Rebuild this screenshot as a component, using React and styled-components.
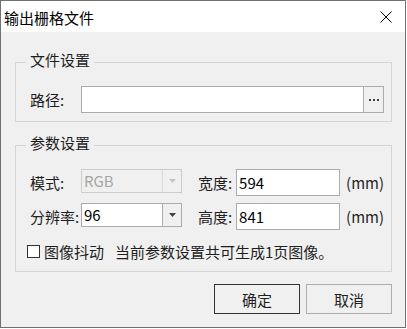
import React from 'react';
import styled, { createGlobalStyle } from 'styled-components';

const GlobalStyle = createGlobalStyle`
  html, body {
    margin: 0;
    padding: 0;
    background: #ffffff;
  }
  body {
    font-family: "Noto Sans CJK SC", "Noto Sans", sans-serif;
    font-size: 15px;
    color: #1e1e1e;
  }
  * {
    box-sizing: border-box;
  }
`;

const Dialog = styled.div`
  width: 406px;
  height: 328px;
  border: 1px solid #707070;
  background: #f0f0f0;
  display: flex;
  flex-direction: column;
`;

const TitleBar = styled.div`
  height: 31px;
  flex-shrink: 0;
  background: #ffffff;
  display: flex;
  align-items: center;
  justify-content: space-between;
  padding: 0 13px 0 3px;
`;

const Title = styled.span`
  font-size: 15px;
  line-height: 15px;
  color: #000000;
  padding-top: 1px;
`;

const CloseButton = styled.span`
  display: flex;
  width: 12px;
  height: 12px;
  margin-top: 1px;
`;

const Body = styled.div`
  flex: 1;
  padding-top: 20px;
  display: flex;
  flex-direction: column;
`;

const Group = styled.fieldset`
  margin: ${p => p.$top}px 13px 0 14px;
  padding: 14px 7px ${p => p.$bottom}px 10px;
  border: 1px solid #d5d5d5;
  min-width: 0;
`;

const Legend = styled.legend`
  padding: 0 4px 5px;
  font-size: 15px;
  line-height: 15px;
  color: #1e1e1e;
`;

const Row = styled.div`
  display: flex;
  align-items: flex-start;
  height: 27px;
  padding-left: 4px;

  & + & {
    margin-top: 7px;
  }
`;

const Label = styled.span`
  flex-shrink: 0;
  width: ${p => p.$w}px;
  margin-left: ${p => p.$ml || 0}px;
  line-height: 27px;
  white-space: nowrap;
`;

const TextBox = styled.input`
  width: ${p => p.$w}px;
  height: 27px;
  margin: 0;
  padding: 0 2px;
  border: 1px solid #ababab;
  background: #ffffff;
  font-family: inherit;
  font-size: 15px;
  color: #000000;
  outline: none;
`;

const PathField = styled.div`
  display: flex;
`;

const BrowseButton = styled.div`
  width: 20px;
  height: 27px;
  border: 1px solid #ababab;
  border-left: none;
  background: #f0f0f0;
  display: flex;
  align-items: center;
  justify-content: center;
`;

const Combo = styled.div`
  width: 104px;
  height: 24px;
  display: flex;
  border: 1px solid ${p => (p.$disabled ? '#cccccc' : '#ababab')};
`;

const ComboValue = styled.span`
  flex: 1;
  padding-left: 2px;
  line-height: 22px;
  background: ${p => (p.$disabled ? '#f0f0f0' : '#ffffff')};
  color: ${p => (p.$disabled ? '#a6a6a6' : '#000000')};
`;

const ComboArrow = styled.span`
  width: 19px;
  display: flex;
  align-items: center;
  justify-content: center;
  background: #f0f0f0;
  border-left: 1px solid ${p => (p.$disabled ? '#dadada' : '#ababab')};
  color: ${p => (p.$disabled ? '#c4c4c4' : '#404040')};
`;

const Unit = styled.span`
  margin-left: 6px;
  line-height: 27px;
`;

const CheckRow = styled.div`
  display: flex;
  align-items: center;
  height: 20px;
  margin-top: 11px;
  padding-left: 1px;
`;

const CheckBox = styled.input`
  appearance: none;
  width: 13px;
  height: 13px;
  margin: 0 4px 0 0;
  border: 1px solid #333333;
  background: #ffffff;
`;

const Note = styled.span`
  margin-left: 11px;
`;

const Buttons = styled.div`
  display: flex;
  justify-content: flex-end;
  gap: 6px;
  margin-top: 12px;
  padding-right: 13px;
`;

const Button = styled.button`
  width: 86px;
  height: 30px;
  margin: 0;
  padding: 0;
  border: 1px solid ${p => (p.$primary ? '#333333' : '#adadad')};
  background: #f0f0f0;
  font-family: inherit;
  font-size: 15px;
  color: #1e1e1e;
`;

const Arrow = () => (
  <svg width="7" height="4" viewBox="0 0 7 4">
    <polygon points="0,0 7,0 3.5,4" fill="currentColor" />
  </svg>
);

const Dropdown = ({ value, disabled }) => (
  <Combo $disabled={disabled}>
    <ComboValue $disabled={disabled}>{value}</ComboValue>
    <ComboArrow $disabled={disabled}>
      <Arrow />
    </ComboArrow>
  </Combo>
);

export default function App() {
  return (
    <>
      <GlobalStyle />
      <Dialog>
        <TitleBar>
          <Title>输出栅格文件</Title>
          <CloseButton>
            <svg width="12" height="12" viewBox="0 0 12 12">
              <path d="M0.5 0.5 L11.5 11.5 M11.5 0.5 L0.5 11.5" stroke="#000" strokeWidth="1" />
            </svg>
          </CloseButton>
        </TitleBar>
        <Body>
          <Group $top={0} $bottom={8}>
            <Legend>文件设置</Legend>
            <Row>
              <Label $w={51}>路径:</Label>
              <PathField>
                <TextBox $w={283} readOnly defaultValue="" />
                <BrowseButton>
                  <svg width="10" height="2" viewBox="0 0 10 2">
                    <rect x="0" y="0" width="2" height="2" fill="#404040" />
                    <rect x="4" y="0" width="2" height="2" fill="#404040" />
                    <rect x="8" y="0" width="2" height="2" fill="#404040" />
                  </svg>
                </BrowseButton>
              </PathField>
            </Row>
          </Group>

          <Group $top={13} $bottom={10}>
            <Legend>参数设置</Legend>
            <Row>
              <Label $w={51}>模式:</Label>
              <Dropdown value="RGB" disabled />
              <Label $w={38} $ml={16}>宽度:</Label>
              <TextBox $w={104} readOnly defaultValue="594" />
              <Unit>(mm)</Unit>
            </Row>
            <Row>
              <Label $w={51}>分辨率:</Label>
              <Dropdown value="96" />
              <Label $w={38} $ml={16}>高度:</Label>
              <TextBox $w={104} readOnly defaultValue="841" />
              <Unit>(mm)</Unit>
            </Row>
            <CheckRow>
              <CheckBox type="checkbox" />
              <span>图像抖动</span>
              <Note>当前参数设置共可生成1页图像。</Note>
            </CheckRow>
          </Group>

          <Buttons>
            <Button $primary>确定</Button>
            <Button>取消</Button>
          </Buttons>
        </Body>
      </Dialog>
    </>
  );
}
